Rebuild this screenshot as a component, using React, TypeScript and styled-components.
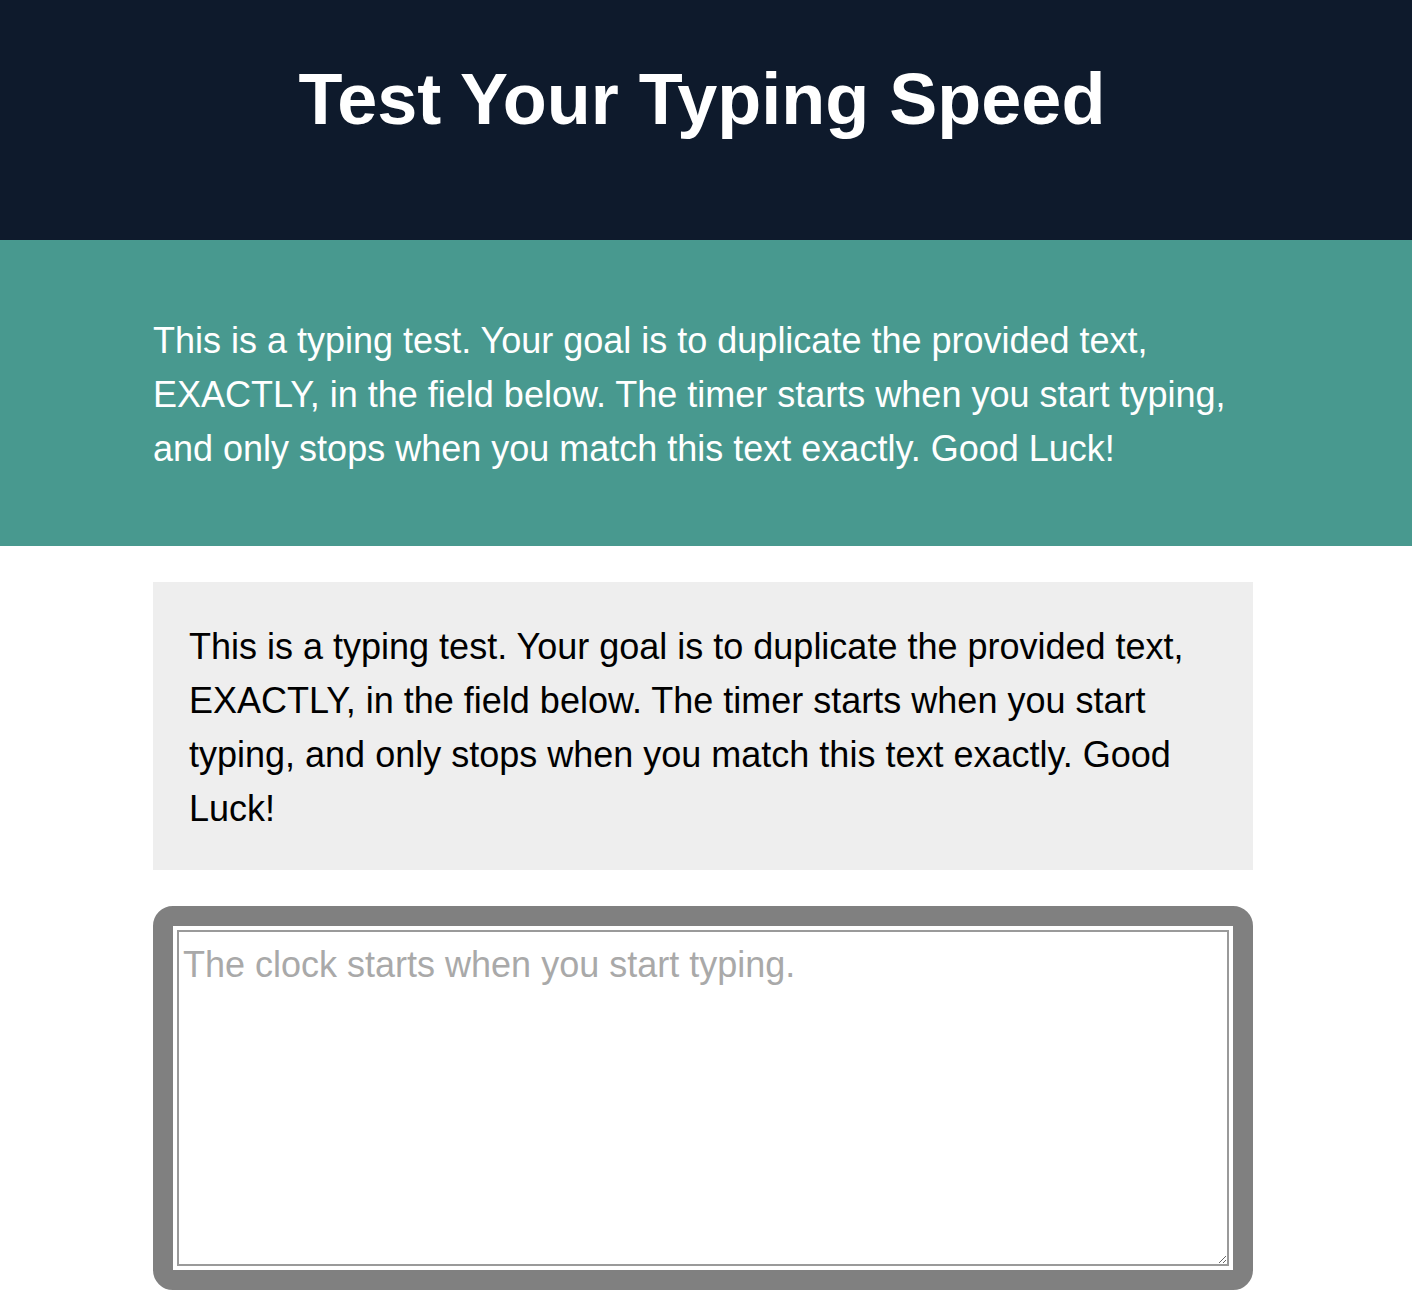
import React from "react";
import styled, { createGlobalStyle } from "styled-components";

const GlobalStyle = createGlobalStyle`
  html, body {
    margin: 0;
    padding: 0;
    background: #fff;
  }
  body {
    font-family: "Liberation Sans", Arial, Helvetica, sans-serif;
    font-size: 36px;
    line-height: 1.5;
    color: #000;
  }
`;

const Header = styled.header`
  background: #0e1a2c;
  height: 240px;
  box-sizing: border-box;
  padding: 58px 8px 0 0;
  text-align: center;
`;

const Title = styled.h1`
  margin: 0;
  color: #fff;
  font-size: 72px;
  font-weight: bold;
  line-height: normal;
`;

const Intro = styled.section`
  background: #48998f;
  padding: 74px 6px 70px 0;
`;

const Wrap = styled.div`
  width: 1100px;
  margin: 0 auto;
`;

const Body = styled.div`
  padding-right: 6px;
`;

const IntroText = styled.p`
  margin: 0;
  color: #fff;
`;

const Main = styled.main`
  padding: 36px 0;
  display: flex;
  flex-direction: column;
  gap: 36px;
`;

const SourceText = styled.div`
  background: #eeeeee;
  padding: 38px 36px 34px;
  p {
    margin: 0;
  }
`;

const InputFrame = styled.div`
  border: 20px solid #808080;
  border-radius: 20px;
  padding: 4px;
`;

const TypingArea = styled.textarea`
  display: block;
  width: 100%;
  height: 336px;
  box-sizing: border-box;
  margin: 0;
  padding: 6px 4px 2px;
  border: 2px solid #9a9a9a;
  font-family: "Liberation Sans", Arial, Helvetica, sans-serif;
  font-size: 36px;
  line-height: 1.5;
  color: #000;
  outline: none;
  &::placeholder {
    color: #a9a9a9;
  }
`;

const text =
  "This is a typing test. Your goal is to duplicate the provided text, EXACTLY, in the field below. The timer starts when you start typing, and only stops when you match this text exactly. Good Luck!";

export default function App() {
  return (
    <>
      <GlobalStyle />
      <Header>
        <Title>Test Your Typing Speed</Title>
      </Header>
      <Intro>
        <Wrap>
          <IntroText>{text}</IntroText>
        </Wrap>
      </Intro>
      <Body>
        <Wrap>
          <Main>
            <SourceText>
              <p>{text}</p>
            </SourceText>
            <InputFrame>
              <TypingArea placeholder="The clock starts when you start typing." />
            </InputFrame>
          </Main>
        </Wrap>
      </Body>
    </>
  );
}
